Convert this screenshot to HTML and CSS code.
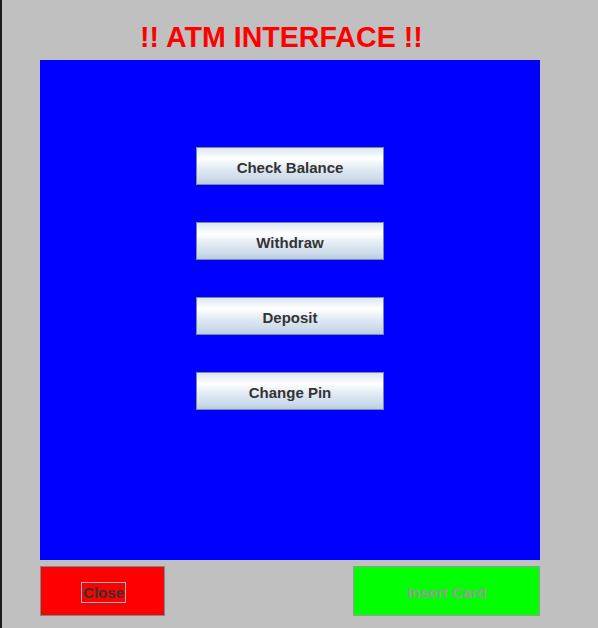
FILE: index.html
```html
<!DOCTYPE html>
<html>
<head>
<meta charset="utf-8">
<title>ATM Interface</title>
<link rel="stylesheet" href="styles.css">
</head>
<body>
<div class="frame">
  <div class="title-bar">
    <h1 class="title">!! ATM INTERFACE !!</h1>
  </div>
  <div class="panel">
    <button class="menu-btn">Check Balance</button>
    <button class="menu-btn">Withdraw</button>
    <button class="menu-btn">Deposit</button>
    <button class="menu-btn">Change Pin</button>
  </div>
  <div class="bottom-row">
    <button class="close-btn"><span class="focus">Close</span></button>
    <button class="insert-btn">Insert Card</button>
  </div>
</div>
</body>
</html>
```
FILE: styles.css
```css
html, body {
  margin: 0;
  padding: 0;
  background: #c0c0c0;
}

.frame {
  box-sizing: border-box;
  width: 598px;
  height: 628px;
  border-left: 2px solid #1c1c1c;
  padding-left: 38px;
  background: #c0c0c0;
  font-family: "Liberation Sans", Arial, sans-serif;
}

.title-bar {
  height: 60px;
  box-sizing: border-box;
  padding-top: 21px;
  padding-left: 100px;
}

.title {
  margin: 0;
  font-size: 28.6px;
  line-height: 32px;
  font-weight: bold;
  color: #ff0000;
  white-space: nowrap;
}

.panel {
  width: 500px;
  height: 500px;
  box-sizing: border-box;
  background: #0000ff;
  display: flex;
  flex-direction: column;
  align-items: center;
  padding-top: 87px;
  gap: 37px;
}

.menu-btn {
  box-sizing: border-box;
  width: 188px;
  height: 38px;
  margin: 0;
  padding: 2px 0 0 0;
  border: 1px solid #7a8a9c;
  background: linear-gradient(to bottom, #dce6f1 0%, #ffffff 30%, #e4ecf5 55%, #ccdaea 85%, #b9cde2 100%);
  font-family: "Liberation Sans", Arial, sans-serif;
  font-size: 15px;
  font-weight: bold;
  color: #333333;
  cursor: pointer;
}

.bottom-row {
  width: 500px;
  margin-top: 6px;
  display: flex;
  justify-content: space-between;
}

.close-btn,
.insert-btn {
  box-sizing: border-box;
  height: 50px;
  margin: 0;
  padding: 2px 0 0 0;
  font-family: "Liberation Sans", Arial, sans-serif;
  font-size: 15px;
  font-weight: bold;
  display: flex;
  align-items: center;
  justify-content: center;
}

.close-btn {
  width: 125px;
  background: #ff0000;
  border: 1px solid #7a8a99;
  color: #333333;
  padding-left: 2px;
}

.focus {
  border: 1px solid #a3b8cc;
  padding: 1px 1px 0 1px;
  line-height: 18px;
}

.insert-btn {
  width: 187px;
  background: #00ff00;
  border: 1px solid #999999;
  color: #999999;
}
```
